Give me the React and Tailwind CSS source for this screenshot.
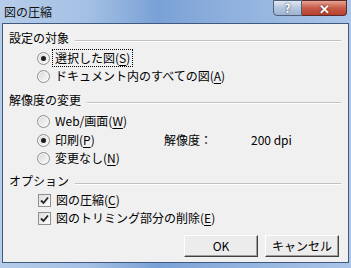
import React from "react";

// ==============================
// Small controls
// ==============================
function Radio({ checked }) {
  return (
    <span className="flex h-[13px] w-[13px] shrink-0 items-center justify-center rounded-full border border-[#8e8f8f] bg-[linear-gradient(135deg,#d6d6d6,#fdfdfd)] shadow-[inset_0_0_0_1px_#f6f6f6]">
      {checked && <span className="h-[5px] w-[5px] rounded-full bg-[#1c1c1c]" />}
    </span>
  );
}

function Check() {
  return (
    <span className="flex h-[13px] w-[13px] shrink-0 items-center justify-center border border-[#8f8f8f] bg-[linear-gradient(135deg,#dedede,#fdfdfd)]">
      <svg width="9" height="9" viewBox="0 0 9 9">
        <path d="M1 4.5 L3.5 7 L8 1.5" fill="none" stroke="#222" strokeWidth="1.8" />
      </svg>
    </span>
  );
}

function Key({ children }) {
  return <span className="underline underline-offset-[2px]">{children}</span>;
}

function Group({ label, className }) {
  return (
    <div className={`flex h-[18px] items-center pl-[6px] pr-[7px] ${className}`}>
      <span>{label}</span>
      <div className="ml-[6px] mt-[5px] flex-1 border-b border-t border-b-white border-t-[#c2c2c2]" />
    </div>
  );
}

function Row({ children, className = "" }) {
  return <div className={`flex h-[18px] items-center pl-[34px] ${className}`}>{children}</div>;
}

function Button({ children }) {
  return (
    <button className="flex h-[22px] w-[74px] items-center justify-center border border-b-[#404040] border-l-white border-r-[#404040] border-t-white bg-[#ececec] shadow-[inset_-1px_-1px_0_#a0a0a0]">
      {children}
    </button>
  );
}

// ==============================
// Dialog
// ==============================
export default function App() {
  return (
    <div className="flex h-[268px] w-[351px] flex-col bg-[linear-gradient(90deg,#b6cde9_0%,#a4c0e4_25%,#7aa1d6_45%,#8fb0dd_65%,#aac5e7_100%)] px-[2px] pb-[5px] font-['Noto_Sans_CJK_JP',sans-serif] text-[12px] leading-[16px] text-black">
      {/* -------- Title bar -------- */}
      <div className="flex h-[23px] items-start">
        <span className="ml-[2px] mt-[4px] text-[12px] text-[#111]">図の圧縮</span>
        <div className="ml-auto mr-[2px] flex">
          <div className="flex h-[16px] w-[29px] items-center justify-center rounded-bl-[4px] border border-[#50607a] bg-[linear-gradient(180deg,#dfe8f4,#b5c6dd_50%,#9db3d1)] text-[12px] font-bold leading-none text-white [text-shadow:0_0_2px_#223]">
            ?
          </div>
          <div className="flex h-[16px] w-[45px] items-center justify-center rounded-br-[4px] border border-l-0 border-[#5a2a2a] bg-[linear-gradient(180deg,#e8a493,#c75a48_50%,#b8402f)] text-[13px] font-bold leading-none text-white [text-shadow:0_0_2px_#411]">
            ✕
          </div>
        </div>
      </div>

      {/* -------- Body -------- */}
      <div className="flex flex-1 flex-col border border-[#3f5a7e] bg-[#f0f0f0]">
        <Group label="設定の対象" className="mt-[5px]" />
        <Row className="mt-[2px]">
          <Radio checked />
          <span className="ml-[3px] px-[2px] outline-1 outline-dotted outline-black">
            選択した図(<Key>S</Key>)
          </span>
        </Row>
        <Row>
          <Radio />
          <span className="ml-[5px]">ドキュメント内のすべての図(<Key>A</Key>)</span>
        </Row>

        <Group label="解像度の変更" className="mt-[6px]" />
        <Row className="mt-[3px]">
          <Radio />
          <span className="ml-[5px]">Web/画面(<Key>W</Key>)</span>
        </Row>
        <Row className="mt-[1px]">
          <div className="flex w-[127px] items-center">
            <Radio checked />
            <span className="ml-[5px]">印刷(<Key>P</Key>)</span>
          </div>
          <span className="w-[87px]">解像度：</span>
          <span>200 dpi</span>
        </Row>
        <Row>
          <Radio />
          <span className="ml-[5px]">変更なし(<Key>N</Key>)</span>
        </Row>

        <Group label="オプション" className="mt-[5px]" />
        <Row className="mt-[1px] pl-[35px]">
          <Check />
          <span className="ml-[5px]">図の圧縮(<Key>C</Key>)</span>
        </Row>
        <Row className="pl-[35px]">
          <Check />
          <span className="ml-[5px]">図のトリミング部分の削除(<Key>E</Key>)</span>
        </Row>

        <div className="mt-[8px] flex justify-end gap-[7px] pr-[9px]">
          <Button>OK</Button>
          <Button>キャンセル</Button>
        </div>
      </div>
    </div>
  );
}
